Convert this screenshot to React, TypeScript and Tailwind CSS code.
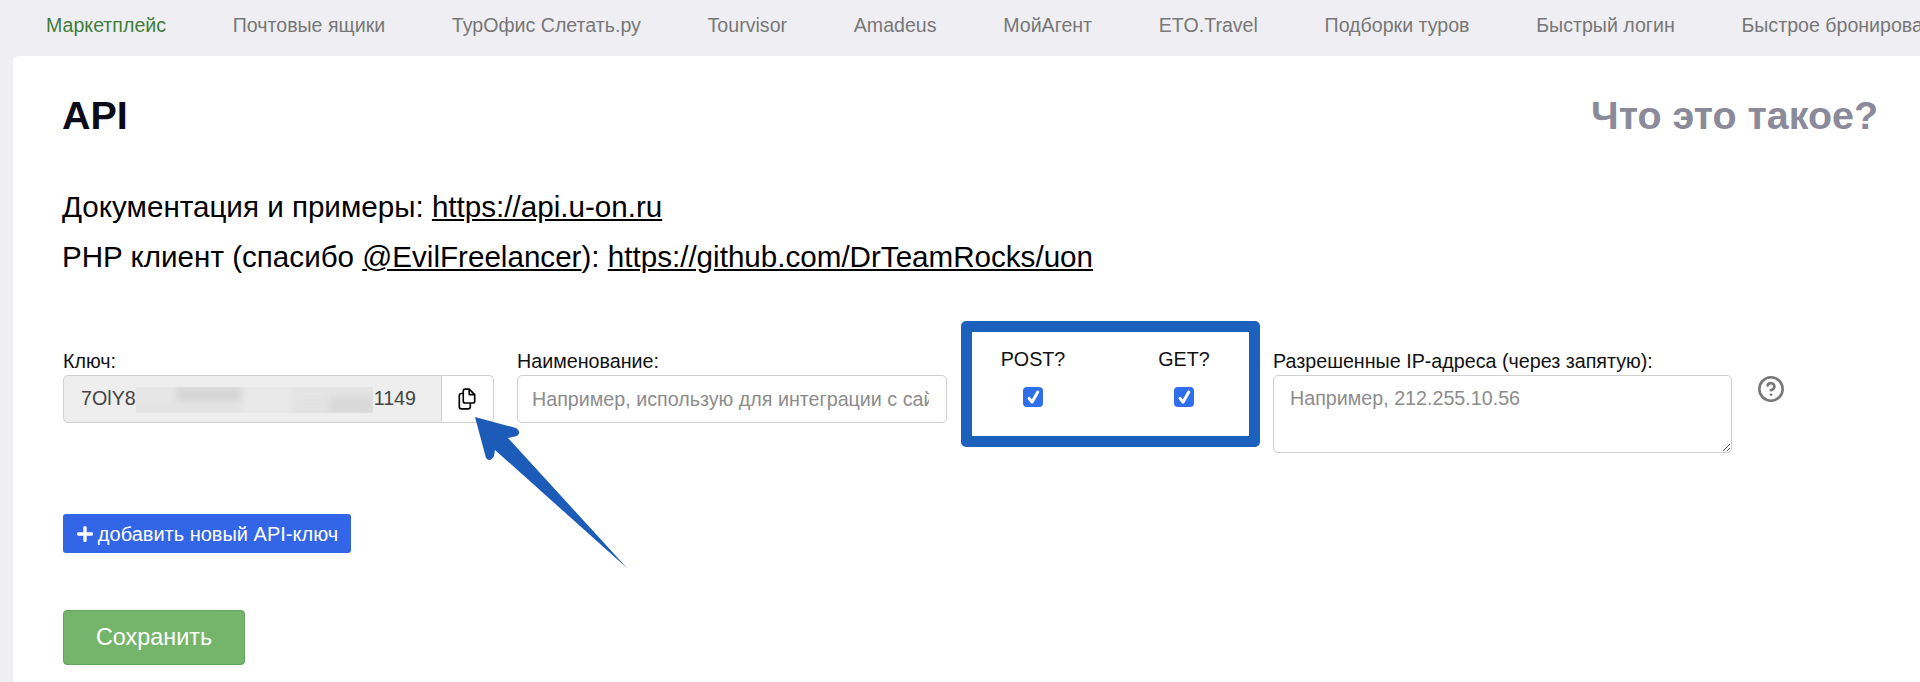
import { FaPlus } from 'react-icons/fa';
import { CircleHelp } from 'lucide-react';

const navItems = [
  'Почтовые ящики',
  'ТурОфис Слетать.ру',
  'Tourvisor',
  'Amadeus',
  'МойАгент',
  'ETO.Travel',
  'Подборки туров',
  'Быстрый логин',
  'Быстрое бронирование',
];

function Check() {
  return (
    <span className="flex h-[20px] w-[20px] items-center justify-center rounded-[4px] bg-[#2f6fed]">
      <svg viewBox="0 0 16 16" className="h-[17px] w-[17px]" fill="none" stroke="white" strokeWidth="2.8" strokeLinecap="round" strokeLinejoin="round">
        <path d="M3.8 8.8 L6.6 12.4 L12 2.8" />
      </svg>
    </span>
  );
}

function CopyIcon() {
  return (
    <svg viewBox="0 0 16 20" className="-ml-[2px] h-[22px] w-[18px]" fill="none" stroke="black" strokeWidth="1.5" strokeLinejoin="round">
      <path d="M4.6 12 V2.6 a1.6 1.6 0 0 1 1.6-1.6 H10 L15 6 V12 a1.6 1.6 0 0 1-1.6 1.6 H6.2 a1.6 1.6 0 0 1-1.6-1.6 z" />
      <path d="M10 1 V6 H15" />
      <path d="M4.6 5 H3 a2 2 0 0 0-2 2 V17 a2 2 0 0 0 2 2 H9 a2 2 0 0 0 2-2 V13.6" />
    </svg>
  );
}

export default function App() {
  return (
    <div className="relative h-[682px] w-[1920px] overflow-hidden bg-[#efeff3] font-['Liberation_Sans',Arial,sans-serif]">
      <nav className="flex h-[56px] items-center gap-[66.7px] whitespace-nowrap pl-[46px] pb-[4px] text-[19.6px] text-[#777777]">
        <span className="text-[#3f7d3a]">Маркетплейс</span>
        {navItems.map((item) => (
          <span key={item}>{item}</span>
        ))}
      </nav>

      <main className="ml-[13px] h-[626px] rounded-tl-[6px] bg-white pl-[50px] pr-[42px] pt-[36px]">
        <div className="flex items-center justify-between text-[39.4px] font-bold leading-[46px]">
          <h1 className="-ml-[1px] text-[#0b0b1a]">API</h1>
          <span className="text-[#8a8a9a]">Что это такое?</span>
        </div>

        <div className="-ml-[1px] mt-[44px] text-[29.6px] leading-[50px] text-black">
          <p>
            Документация и примеры: <a className="underline">https://api.u-on.ru</a>
          </p>
          <p>
            PHP клиент (спасибо <a className="underline">@EvilFreelancer</a>):{' '}
            <a className="underline">https://github.com/DrTeamRocks/uon</a>
          </p>
        </div>

        <div className="mt-[39px] flex items-start text-[19.7px] text-[#111111]">
          <div className="mt-[28px] w-[432px]">
            <label className="mb-[2px] block leading-[24px]">Ключ:</label>
            <div className="flex h-[48px]">
              <div className="relative flex w-[379px] items-center justify-between rounded-l-[5px] border border-[#cfcfcf] bg-[#eeeeee] pl-[17px] pr-[25px] text-[19.7px] text-[#444444]">
                <span>7OlY8</span>
                <span>1149</span>
                {/* замазанная часть ключа */}
                <div className="absolute left-[72px] top-[11px] h-[26px] w-[237px] overflow-hidden bg-[#e4e4e4]">
                  <div className="flex h-full blur-[3px]">
                    <div className="h-[14px] w-[40px] bg-[#e6e6e6]" />
                    <div className="h-[14px] w-[66px] bg-[#d6d6d6]" />
                    <div className="h-full w-[50px] bg-[#e9e9e9]" />
                    <div className="mt-[12px] h-[14px] w-[38px] bg-[#e2e2e2]" />
                    <div className="mt-[10px] h-[16px] w-[43px] bg-[#d8d8d8]" />
                  </div>
                </div>
              </div>
              <button className="flex w-[52px] items-center justify-center rounded-r-[5px] border border-l-0 border-[#cfcfcf] bg-white text-black">
                <CopyIcon />
              </button>
            </div>
          </div>

          <div className="mt-[28px] ml-[22px] w-[430px]">
            <label className="mb-[2px] block leading-[24px]">Наименование:</label>
            <input
              className="h-[48px] w-full rounded-[5px] border border-[#cfcfcf] bg-white pl-[14px] pr-[17px] text-[19.7px] placeholder:text-[#8c8c8c]"
              placeholder="Например, использую для интеграции с сайтом"
            />
          </div>

          <div className="ml-[14px] flex h-[126px] w-[299px] justify-between rounded-[5px] border-[11px] border-[#1c62bd] bg-white px-[29px] pt-[17px]">
            <div className="flex w-[64px] flex-col items-center gap-[18px]">
              <span className="leading-[20px]">POST?</span>
              <Check />
            </div>
            <div className="mr-[8px] flex w-[56px] flex-col items-center gap-[18px]">
              <span className="leading-[20px]">GET?</span>
              <Check />
            </div>
          </div>

          <div className="ml-[13px] mt-[28px] w-[459px]">
            <label className="mb-[2px] block leading-[24px]">Разрешенные IP-адреса (через запятую):</label>
            <textarea
              className="block h-[78px] w-full rounded-[5px] border border-[#cfcfcf] bg-white px-[16px] py-[8px] text-[19.7px] placeholder:text-[#8c8c8c]"
              placeholder="Например, 212.255.10.56"
            />
          </div>

          <CircleHelp className="ml-[25px] mt-[54px] text-[#777777]" size={28} strokeWidth={2.2} />
        </div>

        <button className="mt-[61px] flex h-[39px] w-[288px] items-center justify-center gap-[4px] rounded-[3px] bg-[#3366e6] text-[20px] text-white">
          <FaPlus size={18} />
          добавить новый API-ключ
        </button>

        <button className="mt-[57px] block h-[55px] w-[182px] rounded-[4px] border border-[#63a35c] bg-[#74b56b] text-[23.4px] text-white">
          Сохранить
        </button>
      </main>

      {/* стрелка поверх формы */}
      <svg className="absolute left-0 top-0 h-[682px] w-[1920px]" viewBox="0 0 1920 682" fill="none">
        <path
          d="M475 417 L516 428 Q522 432 517 436 L508 438 L627 568 L495 450 L494 456 Q490 463 486 458 Z"
          fill="#1c5cb8"
        />
      </svg>
    </div>
  );
}
